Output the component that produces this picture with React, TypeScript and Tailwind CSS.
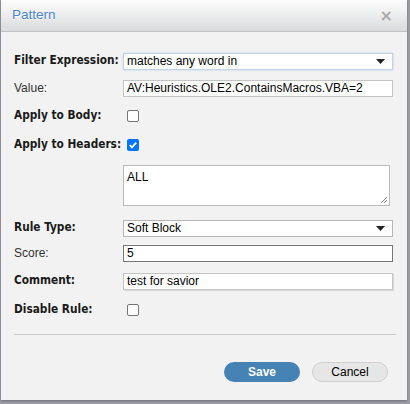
import React from "react";

const boldLabel = "w-[109px] shrink-0 whitespace-nowrap text-[11.75px] font-bold text-[#1a1a1a] [font-family:'DejaVu_Sans_Condensed','DejaVu_Sans',Tahoma,sans-serif]";
const plainLabel = "w-[109px] shrink-0 whitespace-nowrap text-[12px] text-[#333] [font-family:'Liberation_Sans',Arial,sans-serif]";
const field = "h-[17px] w-[270px] bg-white px-[3px] text-[12px] leading-[15px] text-black [font-family:'Liberation_Sans',Arial,sans-serif] flex items-center";

function Arrow() {
  return (
    <svg width="9" height="5" viewBox="0 0 9 5" className="ml-auto mr-[4px]">
      <path d="M0 0h9L4.5 5z" fill="#222" />
    </svg>
  );
}

function Box({ checked }: { checked?: boolean }) {
  if (checked)
    return (
      <div className="ml-[4px] flex h-[12px] w-[12px] items-center justify-center rounded-[2px] bg-[#0075ff]">
        <svg width="10" height="10" viewBox="0 0 10 10">
          <path d="M1.8 5.2l2.2 2.2 4.2-4.8" stroke="#fff" strokeWidth="1.8" fill="none" />
        </svg>
      </div>
    );
  return <div className="ml-[4px] h-[12px] w-[12px] rounded-[2px] border border-[#767676] bg-white" />;
}

function Row({ label, bold, mt, children }: { label: string; bold?: boolean; mt: string; children: React.ReactNode }) {
  return (
    <div className={`flex h-[22px] items-center ${mt}`}>
      <span className={bold ? boldLabel : plainLabel}>{label}</span>
      {children}
    </div>
  );
}

export default function App() {
  return (
    <div className="h-[404px] w-[410px] overflow-hidden bg-[#9b9ba3]">
      <div className="ml-[1px] flex h-[400px] w-[406px] flex-col bg-[#f2f2f2] shadow-[0_1px_2px_rgba(0,0,0,0.3)]">
        <div className="flex h-[32px] shrink-0 items-center border-b border-[#c3c3c3] bg-gradient-to-b from-[#fdfdfd] to-[#dadbdc] px-[11px]">
          <span className="text-[13.5px] text-[#4a86c8] [text-shadow:0_1px_0_#fff] [font-family:'Liberation_Sans',Arial,sans-serif]">
            Pattern
          </span>
          <span className="ml-auto mr-[3px] text-[16px] font-bold leading-none text-[#a9a9a9] [font-family:'DejaVu_Sans',sans-serif]">
            ×
          </span>
        </div>

        <div className="flex flex-col pl-[13px]">
          <Row label="Filter Expression:" bold mt="mt-[18px]">
            <div className={`${field} border border-[#c2d3e8] shadow-[0_0_2px_#b8cde6]`}>
              matches any word in
              <Arrow />
            </div>
          </Row>
          <Row label="Value:" mt="mt-[5px]">
            <div className={`${field} border border-[#c4c4c4]`}>AV:Heuristics.OLE2.ContainsMacros.VBA=2</div>
          </Row>
          <Row label="Apply to Body:" bold mt="mt-[6px]">
            <Box />
          </Row>
          <Row label="Apply to Headers:" bold mt="mt-[7px]">
            <Box checked />
          </Row>
          <div className="mt-[9px] flex">
            <div className="w-[109px] shrink-0" />
            <div className="relative h-[41px] w-[267px] border border-[#bdbdbd] bg-white px-[3px] pt-[2px] text-[12px] text-black [font-family:'Liberation_Sans',Arial,sans-serif]">
              ALL
              <svg width="8" height="8" viewBox="0 0 8 8" className="absolute bottom-[1px] right-[1px]">
                <path d="M7 1L1 7M7 4L4 7" stroke="#888" strokeWidth="0.8" />
              </svg>
            </div>
          </div>
          <Row label="Rule Type:" bold mt="mt-[11px]">
            <div className={`${field} border border-[#b5b5b5]`}>
              Soft Block
              <Arrow />
            </div>
          </Row>
          <Row label="Score:" mt="mt-[3px]">
            <div className={`${field} h-[14px] border border-[#767676] leading-[12px]`}>5</div>
          </Row>
          <Row label="Comment:" bold mt="mt-[6px]">
            <div className={`${field} border border-[#c4c4c4] shadow-[1px_1px_1px_rgba(0,0,0,0.1)]`}>test for savior</div>
          </Row>
          <Row label="Disable Rule:" bold mt="mt-[7px]">
            <Box />
          </Row>
          <div className="mr-[11px] mt-[13px] h-px bg-[#c9c9c9]" />
          <div className="mr-[19px] mt-[27px] flex justify-end gap-[12px] [font-family:'Liberation_Sans',Arial,sans-serif]">
            <div className="flex h-[20px] w-[76px] items-center justify-center rounded-full bg-[#4682b4] text-[12px] font-bold text-white">
              Save
            </div>
            <div className="flex h-[20px] w-[76px] items-center justify-center rounded-full border border-[#cfcfcf] bg-[#e6e6e6] text-[12px] text-black">
              Cancel
            </div>
          </div>
        </div>
      </div>
    </div>
  );
}
